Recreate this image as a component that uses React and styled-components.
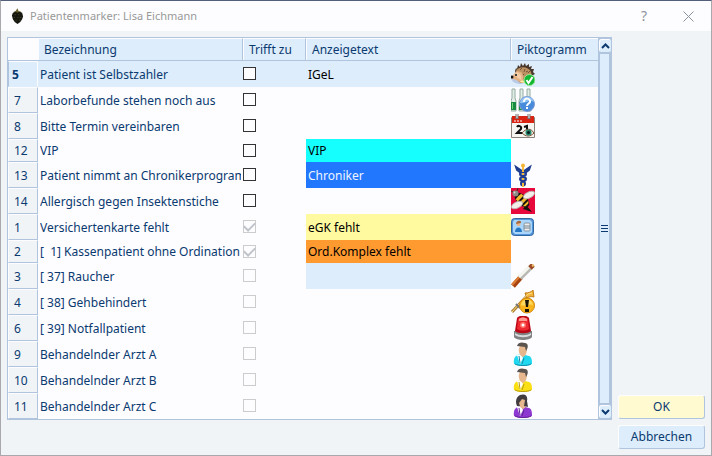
import React from 'react';
import styled, { createGlobalStyle, css } from 'styled-components';

const GlobalStyle = createGlobalStyle`
  * {
    box-sizing: border-box;
  }

  body {
    margin: 0;
    font-family: 'Noto Sans', 'Open Sans', sans-serif;
    font-size: 12px;
    line-height: 16px;
    color: #0a3a70;
  }

  button, input {
    font: inherit;
    color: inherit;
  }
`;

const Dialog = styled.div`
  display: flex;
  flex-direction: column;
  min-height: 100vh;
  border: 1px solid #a9a9ad;
  border-top-color: #52607a;
  background: #f0f4f7;
`;

const TitleBar = styled.header`
  display: flex;
  align-items: center;
  height: 30px;
  padding: 0 4px 0 10px;
  gap: 6px;
  background: #fdfdff;
`;

const Title = styled.h1`
  flex: 1;
  margin: 0;
  font-size: 11px;
  font-weight: 400;
  color: #999999;
`;

const TitleButton = styled.button`
  display: grid;
  place-items: center;
  width: 38px;
  height: 28px;
  padding: 0;
  border: 0;
  background: none;
  color: #8c939c;
  font-size: 14px;
`;

const Content = styled.main`
  display: flex;
  flex: 1;
  gap: 6px;
  padding: 6px;
`;

const Panel = styled.section`
  display: flex;
  flex: 1;
  align-self: flex-start;
  min-width: 0;
  border: 1px solid #b0c4de;
  border-right: 0;
  background: #fdfdff;
`;

const MarkerTable = styled.table`
  flex: 1;
  width: 100%;
  min-width: 0;
  table-layout: fixed;
  border-collapse: separate;
  border-spacing: 0;
`;

const Column = styled.col`
  width: ${({ $width }) => $width};
`;

const HeadCell = styled.th`
  height: 23px;
  padding: 0 0 0 6px;
  border-top: 1px solid #fdfdff;
  border-right: 1px solid #b0c4de;
  border-bottom: 1px solid #b0c4de;
  background: #ddedfb;
  box-shadow: inset 1px 0 #fdfdff;
  font-weight: 400;
  text-align: left;

  &:last-child {
    border-right: 0;
  }
`;

const CornerCell = styled.td`
  padding: 0;
  border-bottom: 1px solid #b0c4de;
`;

const Row = styled.tr`
  height: ${({ $compact }) => ($compact ? '23px' : '26px')};
  background: ${({ $selected }) => ($selected ? '#ddedfb' : 'transparent')};
`;

const RowNumber = styled.th`
  padding: 1px 0 0 5px;
  border: 1px solid #fdfdff;
  border-right-color: #b0c4de;
  border-bottom-color: #b0c4de;
  background: #f0f4f7;
  font-weight: 400;
  text-align: left;

  ${({ $selected }) =>
    $selected &&
    css`
      padding-left: 3px;
      border-left-color: #b0c4de;
      border-right-color: #fdfdff;
      border-bottom-color: #ddedfb;
      background: #ddedfb;
      font-weight: 700;
    `}
`;

const Cell = styled.td`
  padding: 1px 2px 0;
  overflow: hidden;
  white-space: pre;
`;

const MarkerLabel = styled.label`
  display: block;
  overflow: hidden;
`;

const CheckCell = styled(Cell)`
  padding: 0 0 1px;
`;

const TextCell = styled(Cell)`
  background: ${({ $bg }) => $bg || 'transparent'};
  color: ${({ $color }) => $color || '#000000'};
`;

const IconCell = styled(Cell)`
  padding: 0;

  svg {
    display: block;
  }
`;

const Checkbox = styled.input`
  display: grid;
  place-items: center;
  appearance: none;
  width: 13px;
  height: 13px;
  margin: 0;
  border: 1px solid #333333;
  background: #fdfdff;

  &:disabled {
    border-color: #cccccc;
  }

  &:checked::before {
    content: '';
    width: 9px;
    height: 5px;
    border-left: 2px solid #c0c4ca;
    border-bottom: 2px solid #c0c4ca;
    transform: translateY(-1px) rotate(-45deg);
  }
`;

const ScrollBar = styled.div`
  display: flex;
  flex-direction: column;
  width: 14px;
  background: #b0c4de;
`;

const ScrollButton = styled.button`
  display: grid;
  place-items: center;
  height: 15px;
  padding: 0;
  border: 1px solid #b0c4de;
  border-radius: 3px;
  background: #ddedfb;
  color: #0a3a70;
  box-shadow: inset 1px 1px #fdfdff;
`;

const ScrollThumb = styled.div`
  display: flex;
  flex: 1;
  flex-direction: column;
  align-items: center;
  justify-content: center;
  gap: 2px;
  margin: 1px 3px 1px 2px;
  background: #ddedfb;
`;

const GripLine = styled.span`
  width: 7px;
  height: 1px;
  background: #0a3a70;
`;

const Actions = styled.div`
  display: flex;
  flex-direction: column;
  justify-content: flex-end;
  gap: 6px;
  width: 87px;
`;

const ActionButton = styled.button`
  height: 24px;
  padding: 0;
  border: 1px solid #fdfdff;
  border-right-color: #b0c4de;
  border-bottom-color: #b0c4de;
  border-radius: 3px;
  background: ${({ $primary }) => ($primary ? '#fffad0' : '#ddedfb')};
`;

const Svg = ({ children, ...props }) => (
  <svg width="24" height="24" viewBox="0 0 24 24" aria-hidden="true" {...props}>
    {children}
  </svg>
);

const BerryIcon = () => (
  <svg width="13" height="17" viewBox="0 0 14 18" aria-hidden="true">
    <path d="M3 4 5 3 7 0l1 3 3 1-2 2H5z" fill="#67602b" />
    <path d="M2 5 5 4l2 1 2-1 3 1 1 4-1 3-2 3-3 2-3-2-2-3-1-4z" fill="#17180f" />
    <path d="M4 7h1m3 0h1M3 10h1m3 0h1m2 0h1M5 13h1m3 0h1" stroke="#555036" />
  </svg>
);

const HedgehogIcon = () => (
  <Svg>
    <path d="M0 16c3-2 8 0 12 6H8c-4-1-7-2-8-6z" fill="#b9cae5" />
    <path d="m4 9 1-3 1 1 1-4 2 2 1-4 2 3 2-3 1 3 3-2v3l3-1-1 3 3 0-1 3 2 2-2 1 1 3-2 1v3H8z" fill="#4a372b" />
    <path d="M5 9c3-5 12-5 15 1l1 6-5 5H9L6 15z" fill="#bd9262" />
    <path d="m9 8 2-2m2 4 1-3m3 4 2-2m-8 5 2-2m4 4 2-3m-8 5 2-2m-4-2-2 1m10-6-2 1" stroke="#765238" />
    <path d="M6 9 1 14l-1 2 5 2 6 3c3-3 1-9-1-11z" fill="#e5b286" />
    <path d="M6 10 3 13l4 3 3 2c1-3 0-6-4-8z" fill="#f3cda8" />
    <circle cx="1" cy="15" r="1.500" fill="#111" />
    <circle cx="5" cy="13" r="1" fill="#111" />
    <path d="M9 20c2-3 5-1 5 1z" fill="#fff0a2" />
    <circle cx="18.500" cy="18" r="5.500" fill="#13b832" stroke="#98e699" />
    <path d="m15.500 18 2 3 4-6" fill="none" stroke="#fff" strokeWidth="2" />
  </Svg>
);

const BottlesIcon = () => (
  <Svg>
    {[0, 8, 15].map((x) => (
      <g key={x} transform={`translate(${x} 0)`}>
        <path d="M1 1h3v9l1 3v10H0V13l1-3z" fill="#e3ede7" stroke="#93aca2" />
        <path d="M0 14h5v8H0z" fill="#198b41" />
        <path d="M1 15h1v6H1z" fill="#71d279" />
      </g>
    ))}
    <circle cx="16" cy="16" r="7.500" fill="#488bda" stroke="#7e9ad4" />
    <path d="M9 15c2-8 12-8 14-1-4-3-9 2-14 1z" fill="#8fc3f4" />
    <path d="M13 14c0-5 7-4 6 0-1 2-3 2-3 4m0 1v2" fill="none" stroke="#fff" strokeWidth="2" />
  </Svg>
);

const CalendarIcon = () => (
  <Svg>
    <path d="M.5 3.500h23v20H.5z" fill="#f7f5f1" stroke="#8b8177" />
    <path d="M1 2h22v7H1z" fill="#da2413" />
    <path d="M3 7h2m1 0h2m1 0h2" stroke="#fff" />
    <path d="M6 0v5M18 0v5" stroke="#777" strokeWidth="3" />
    <path d="M6 0v4M18 0v4" stroke="#eee" />
    <path d="M6 13c1-2 5-1 4 2l-4 4h5m2-6 3-1v7m-3 0h6" fill="none" stroke="#111" strokeWidth="2" />
    <path d="M11 19c4-5 9-5 12 0-4 4-8 4-12 0z" fill="#e3eee0" stroke="#784b32" />
    <circle cx="17.500" cy="18.500" r="3" fill="#26866c" />
    <circle cx="17.500" cy="18.500" r="1.500" fill="#071d20" />
  </Svg>
);

const CaduceusIcon = () => (
  <Svg>
    <path d="M12 2v22" stroke="#d99520" strokeWidth="2" />
    <path d="M11 8 5 4l1 3 4 3m3-2 6-4-1 3-4 3" fill="#4f7cc4" stroke="#1d3c8e" strokeWidth="2" />
    <ellipse cx="12" cy="11" rx="3" ry="2" fill="#7894bb" stroke="#203d90" strokeWidth="2" />
    <ellipse cx="12" cy="16" rx="3" ry="2" fill="#7894bb" stroke="#203d90" strokeWidth="2" />
    <ellipse cx="12" cy="20.500" rx="2" ry="2" fill="#7894bb" stroke="#203d90" strokeWidth="2" />
    <path d="M12 3v6m0 1v2m0 3v2m0 3v4" stroke="#f4b83b" strokeWidth="2" />
    <circle cx="12" cy="2.500" r="2" fill="#f5b636" />
  </Svg>
);

const BeeIcon = () => (
  <Svg height="26" viewBox="0 0 24 26">
    <path d="M0 0h24v26H0z" fill="#e8093c" />
    <path d="m15 17 6 7-9-3z" fill="#17120d" />
    <g transform="rotate(45 11 12)">
      <ellipse cx="11" cy="12" rx="9" ry="5" fill="#17120d" />
      <path d="M6 8h3v8H6q-1-4 0-8zM11 7h3v10h-3zM16 8l2 2v4l-2 2z" fill="#f7b92b" />
    </g>
    <ellipse cx="18" cy="7" rx="6" ry="3" transform="rotate(-28 18 7)" fill="#f3efeb" stroke="#b9b0ae" />
    <ellipse cx="6" cy="17" rx="6" ry="3" transform="rotate(-28 6 17)" fill="#f3efeb" stroke="#b9b0ae" />
    <circle cx="4.500" cy="5.500" r="3" fill="#8e8984" />
    <circle cx="3.500" cy="4.500" r="1" fill="#d8d5d0" />
    <path d="M6 3 7 0M2 4 0 3" stroke="#3c3027" />
  </Svg>
);

const CardIcon = () => (
  <Svg>
    <rect x=".5" y="3.500" width="22" height="17" rx="3" fill="#5396db" stroke="#32669f" />
    <path d="M3 5h16l2 2v10l-2 2H4l-2-2V7z" fill="#a9d6fa" />
    <path d="M4 17c0-6 7-6 7 0z" fill="#267ac5" />
    <circle cx="7.500" cy="9" r="2" fill="#f0b37f" />
    <path d="M5 9c0-4 6-4 5-1z" fill="#a56840" />
    <rect x="13" y="8" width="6" height="8" rx="1" fill="#eee" stroke="#8494a2" />
    <path d="M13 11h6m-6 2h6" stroke="#728492" />
  </Svg>
);

const CigaretteIcon = () => (
  <Svg>
    <path d="m2 22 8-9" stroke="#a54411" strokeWidth="5" />
    <path d="m1 21 8-9" stroke="#df7d34" strokeWidth="2" />
    <path d="M9 14 20 3" stroke="#b8b8b3" strokeWidth="5" />
    <path d="M8 13 19 2" stroke="#f5f5f0" strokeWidth="3" />
    <path d="m19 4 3-3" stroke="#9c4b24" strokeWidth="5" />
    <path d="m21 2 2-1" stroke="#f0bd6e" strokeWidth="2" />
  </Svg>
);

const DisabilityIcon = () => (
  <Svg>
    <path d="M1 22 17 5" fill="none" stroke="#a77b31" strokeWidth="3" />
    <path d="M14 3c4 0 6-1 8-3l1 7c-3-1-5 0-7 1z" fill="#f2b33a" stroke="#c07b16" />
    <path d="M1 22 17 4l4-1" fill="none" stroke="#ffe183" />
    <path d="m5 14 4 4" stroke="#777" strokeWidth="2" />
    <circle cx="16" cy="15.500" r="7.500" fill="#f8b51c" stroke="#cf850c" />
    <path d="M10 15c1-7 11-7 12 0-3-2-8 2-12 0z" fill="#ffda60" />
    <path d="M14 10h4l-1 7h-2zM14 19h4v3h-4z" fill="#171307" />
  </Svg>
);

const SirenIcon = () => (
  <Svg>
    <path d="M3 15h18v6c-2 4-16 4-18 0z" fill="#808284" />
    <path d="M4 17c4 3 12 3 16 0v2c-4 3-12 3-16 0z" fill="#d8dbdc" />
    <path d="M6 2c2-3 10-3 12 0l2 13c-3 3-13 3-16 0z" fill="#b90715" />
    <path d="M7 3c2-2 8-2 10 0l1 10c-3 2-9 2-12 0z" fill="#ee2931" />
    <path d="M8 3c2-2 6-2 8 0v2H8z" fill="#ff9b91" />
    <circle cx="12" cy="9" r="3" fill="#ff7065" />
    <circle cx="12" cy="9" r="1.500" fill="#fff" />
  </Svg>
);

const DoctorIcon = ({ coat, shade, longHair }) => (
  <Svg>
    <path d="M3 22c-1-7 2-9 7-10l8 2c3 1 3 5 3 8-5 3-13 3-18 0z" fill={coat} />
    <path d="M4 22c4 2 12 2 16 0" fill="none" stroke={shade} />
    <path d="m6 13 4-1 2 4-3 6z" fill="#fff" />
    <path d="m8 14 1 7m4-5-2 6" fill="none" stroke={shade} />
    <path d="M8 6c1-4 7-4 8 0 0 4-1 8-4 9-3-1-5-5-4-9z" fill="#e7b78e" />
    {longHair ? (
      <path d="M6 12C4 8 5 3 9 1c6-2 8 2 7 6l1 6-4-1 1-6-3-1-3 4 1 3z" fill="#403c40" />
    ) : (
      <path d="M6 4c1-4 5-4 8-3 3 0 4 4 1 8l-1-4z" fill="#5b544f" />
    )}
  </Svg>
);

const markers = [
  { nr: 5, name: 'Patient ist Selbstzahler', text: 'IGeL', icon: <HedgehogIcon />, selected: true },
  { nr: 7, name: 'Laborbefunde stehen noch aus', icon: <BottlesIcon /> },
  { nr: 8, name: 'Bitte Termin vereinbaren', icon: <CalendarIcon /> },
  { nr: 12, name: 'VIP', text: 'VIP', bg: '#16ffff' },
  { nr: 13, name: 'Patient nimmt an Chronikerprogram', text: 'Chroniker', bg: '#2277ff', color: '#f0f4ff', icon: <CaduceusIcon /> },
  { nr: 14, name: 'Allergisch gegen Insektenstiche', icon: <BeeIcon /> },
  { nr: 1, name: 'Versichertenkarte fehlt', text: 'eGK fehlt', bg: '#fffaa0', icon: <CardIcon />, locked: true, checked: true },
  { nr: 2, name: '[  1] Kassenpatient ohne Ordination', text: 'Ord.Komplex fehlt', bg: '#ff9a30', locked: true, checked: true },
  { nr: 3, name: '[ 37] Raucher', bg: '#ddedfb', icon: <CigaretteIcon />, locked: true },
  { nr: 4, name: '[ 38] Gehbehindert', icon: <DisabilityIcon />, locked: true },
  { nr: 6, name: '[ 39] Notfallpatient', icon: <SirenIcon />, locked: true },
  { nr: 9, name: 'Behandelnder Arzt A', icon: <DoctorIcon coat="#20d8ef" shade="#168ca8" />, locked: true },
  { nr: 10, name: 'Behandelnder Arzt B', icon: <DoctorIcon coat="#f9df13" shade="#b79c16" />, locked: true },
  { nr: 11, name: 'Behandelnder Arzt C', icon: <DoctorIcon coat="#8d39d1" shade="#632394" longHair />, locked: true },
];

function MarkerRow({ marker }) {
  const { nr, name, text, bg, color, icon, selected, locked, checked } = marker;

  return (
    <Row $compact={!icon} $selected={selected}>
      <RowNumber scope="row" $selected={selected}>{nr}</RowNumber>
      <Cell>
        <MarkerLabel htmlFor={`marker-${nr}`}>{name}</MarkerLabel>
      </Cell>
      <CheckCell>
        <Checkbox id={`marker-${nr}`} type="checkbox" defaultChecked={checked} disabled={locked} />
      </CheckCell>
      <TextCell $bg={bg} $color={color}>{text}</TextCell>
      <IconCell>{icon}</IconCell>
    </Row>
  );
}

export default function App() {
  return (
    <>
      <GlobalStyle />
      <Dialog>
        <TitleBar>
          <BerryIcon />
          <Title>Patientenmarker: Lisa Eichmann</Title>
          <TitleButton type="button" aria-label="Hilfe">?</TitleButton>
          <TitleButton type="button" aria-label="Schließen">
            <svg width="11" height="11" viewBox="0 0 11 11" aria-hidden="true">
              <path d="m.5.5 10 10m0-10-10 10" stroke="currentColor" />
            </svg>
          </TitleButton>
        </TitleBar>
        <Content>
          <Panel>
            <MarkerTable>
              <colgroup>
                <Column $width="30px" />
                <Column $width="auto" />
                <Column $width="63px" />
                <Column $width="auto" />
                <Column $width="87px" />
              </colgroup>
              <thead>
                <tr>
                  <CornerCell />
                  <HeadCell scope="col">Bezeichnung</HeadCell>
                  <HeadCell scope="col">Trifft zu</HeadCell>
                  <HeadCell scope="col">Anzeigetext</HeadCell>
                  <HeadCell scope="col">Piktogramm</HeadCell>
                </tr>
              </thead>
              <tbody>
                {markers.map((marker) => (
                  <MarkerRow key={marker.nr} marker={marker} />
                ))}
              </tbody>
            </MarkerTable>
            <ScrollBar>
              <ScrollButton type="button" aria-label="Nach oben">
                <svg width="9" height="6" viewBox="0 0 9 6" aria-hidden="true">
                  <path d="m1 5 3.500-3.500L8 5" fill="none" stroke="currentColor" strokeWidth="2" />
                </svg>
              </ScrollButton>
              <ScrollThumb>
                <GripLine />
                <GripLine />
                <GripLine />
              </ScrollThumb>
              <ScrollButton type="button" aria-label="Nach unten">
                <svg width="9" height="6" viewBox="0 0 9 6" aria-hidden="true">
                  <path d="m1 1 3.500 3.500L8 1" fill="none" stroke="currentColor" strokeWidth="2" />
                </svg>
              </ScrollButton>
            </ScrollBar>
          </Panel>
          <Actions>
            <ActionButton type="button" $primary>OK</ActionButton>
            <ActionButton type="button">Abbrechen</ActionButton>
          </Actions>
        </Content>
      </Dialog>
    </>
  );
}
